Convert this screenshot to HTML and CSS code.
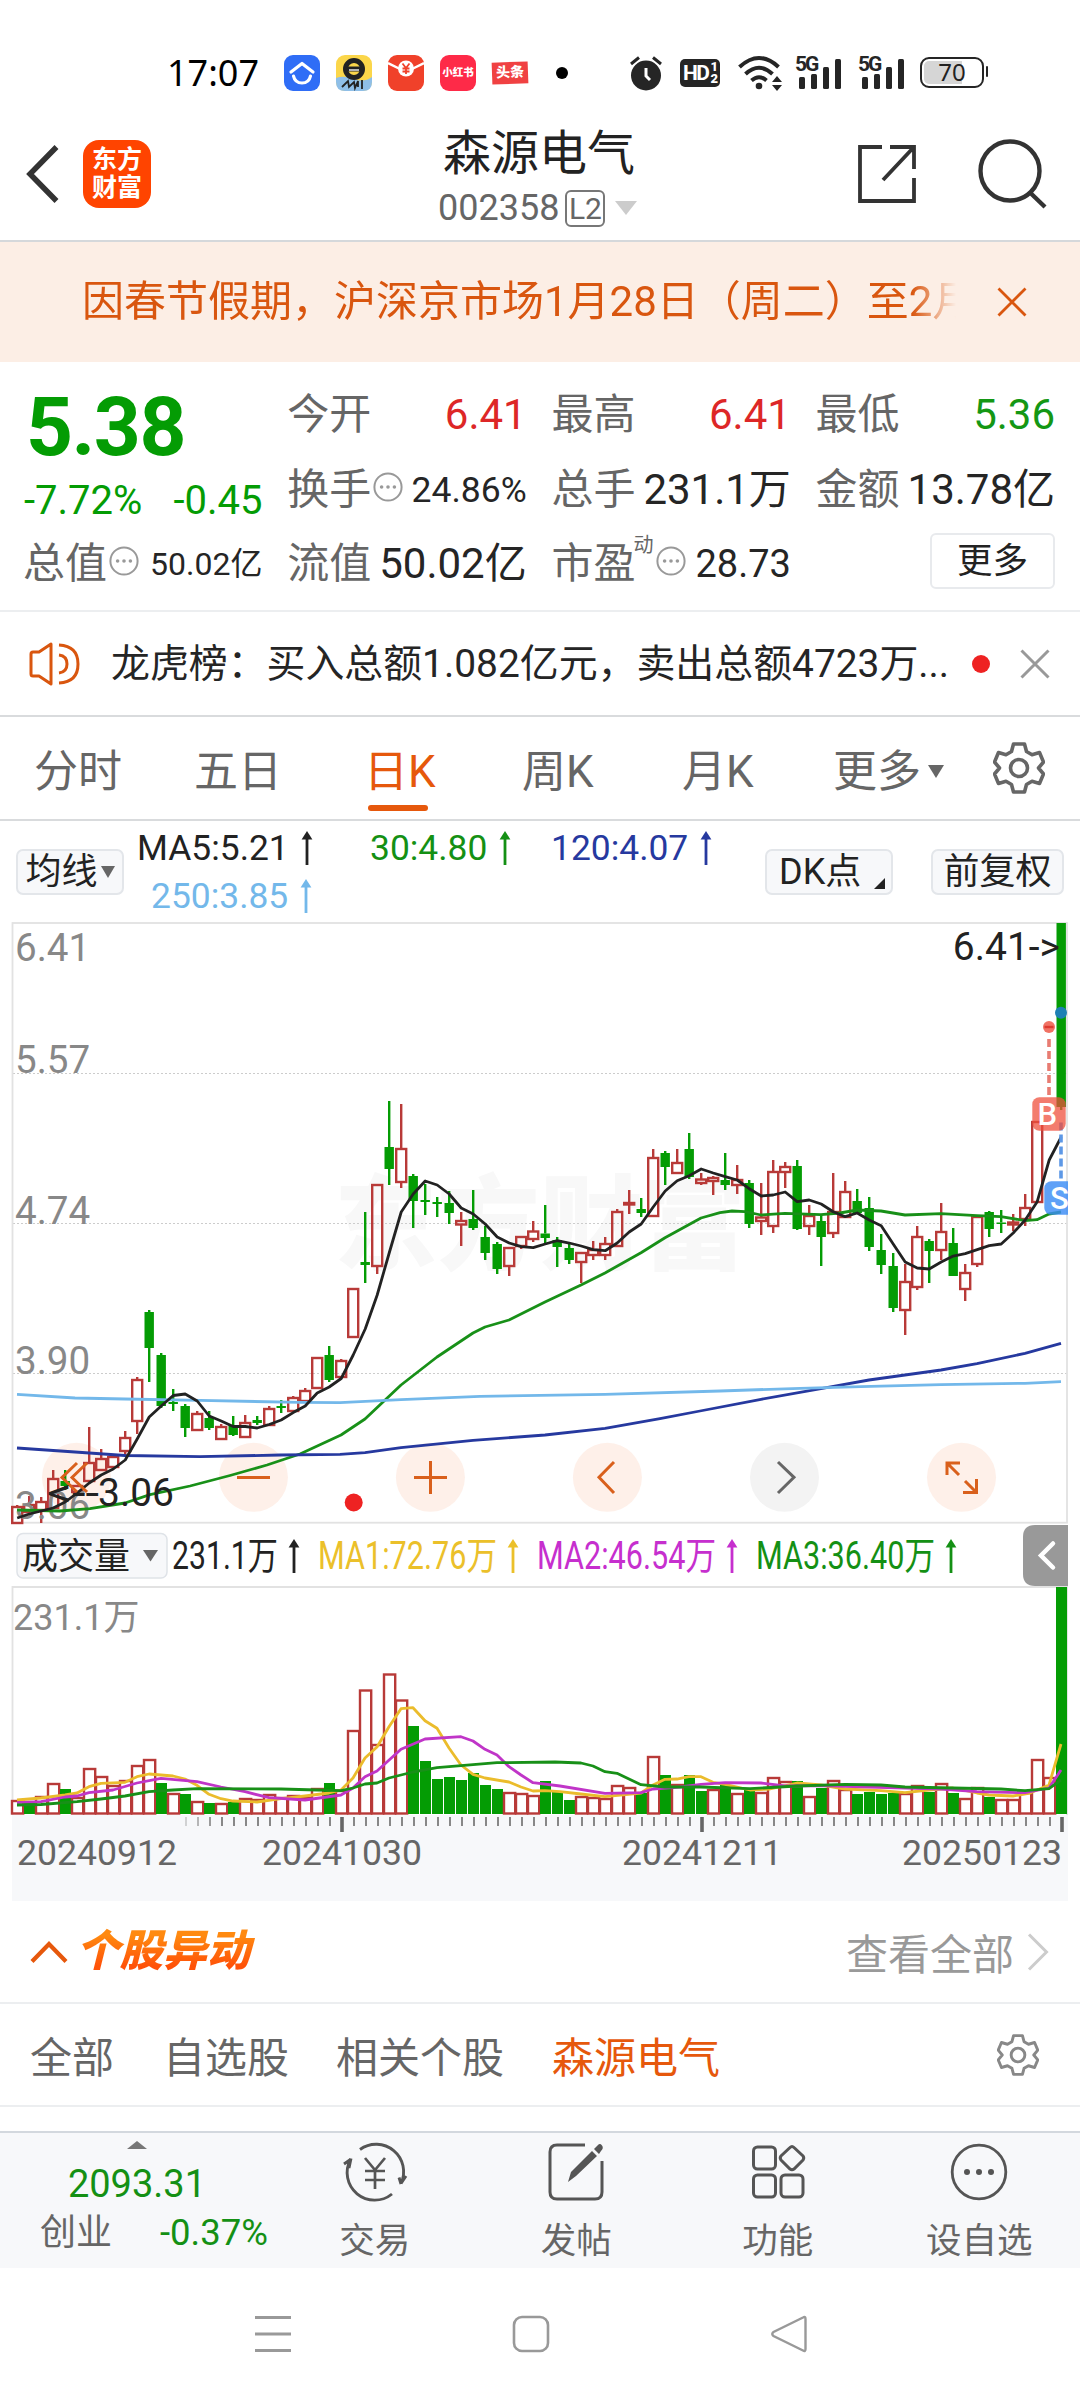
FILE: index.html
```html
<!DOCTYPE html>
<html lang="zh-CN">
<head>
<meta charset="utf-8">
<title>森源电气 002358</title>
<link rel="stylesheet" href="styles.css">
</head>
<body>
<svg class="defs" width="0" height="0" aria-hidden="true">
  <symbol id="more" viewBox="0 0 30 30"><circle cx="15" cy="15" r="13.6" fill="none" stroke="#999" stroke-width="2"/><g fill="#999"><circle cx="8.6" cy="15" r="1.8"/><circle cx="15" cy="15" r="1.8"/><circle cx="21.4" cy="15" r="1.8"/></g></symbol>
  <symbol id="arrow" viewBox="0 0 12 34"><path d="M6 4V34" stroke="currentColor" stroke-width="2.8"/><path d="M.6 8.500L6 0L11.400 8.500Z" fill="currentColor"/></symbol>
  <symbol id="gear" viewBox="0 0 52 52"><path d="M20.500 2H31.500L33.500 9.500L39 12.700L46.500 10.500L50.500 20L45.500 26L50.500 32L46.500 41.500L39 39.300L33.500 42.500L31.500 50H20.500L18.500 42.500L13 39.300L5.500 41.500L1.500 32L6.500 26L1.500 20L5.500 10.500L13 12.700L18.500 9.500Z" fill="none" stroke="currentColor" stroke-width="3.600" stroke-linejoin="round"/><circle cx="26" cy="26" r="8.500" fill="none" stroke="currentColor" stroke-width="3.600"/></symbol>
  <symbol id="bars" viewBox="0 0 48 34"><g fill="#252525"><rect x="4" y="21" width="6" height="12" rx="1.500"/><rect x="16" y="18" width="6" height="15" rx="1.500"/><rect x="28" y="11" width="6" height="22" rx="1.500"/><rect x="40" y="3" width="6" height="30" rx="1.500"/></g></symbol>
</svg>

<header class="status">
  <span class="clock">17:07</span>
  <svg class="app" viewBox="0 0 36 36"><rect width="36" height="36" rx="9" fill="#2f6df6"/><path d="M7 17L18 8.500L29 17M9.500 21Q11 28 18 28T26.500 21" fill="none" stroke="#fff" stroke-width="3.200" stroke-linecap="round" stroke-linejoin="round"/></svg>
  <svg class="app" viewBox="0 0 36 36"><rect width="36" height="36" rx="9" fill="#fbd64a"/><path d="M0 23Q8 20 18 24T36 22V27Q36 36 27 36H9Q0 36 0 27Z" fill="#8fbfe8"/><circle cx="18" cy="14" r="8.500" fill="none" stroke="#222" stroke-width="5"/><path d="M10 14H26" stroke="#222" stroke-width="5"/><path d="M13 15H23" stroke="#ddd" stroke-width="1.600"/><path d="M6 32L12 26L13 32L18 27L19 33L22 26V32M26 25V34" fill="none" stroke="#222" stroke-width="1.800"/></svg>
  <svg class="app" viewBox="0 0 36 36"><rect width="36" height="36" rx="9" fill="#f0412a"/><path d="M0 8L12 14M36 8L24 14" stroke="#fff" stroke-width="2.500"/><circle cx="18" cy="13.500" r="8" fill="#fff"/><path d="M14.500 8.500L18 13L21.500 8.500M18 13V19M14.500 13.500H21.500M14.500 16.500H21.500" stroke="#f0412a" stroke-width="1.800" fill="none"/></svg>
  <span class="app app-book">小红书</span>
  <span class="app app-news">头条</span>
  <i class="status-dot"></i>
  <svg class="alarm" viewBox="0 0 34 36"><circle cx="17" cy="20.500" r="15" fill="#252525"/><path d="M2 9L10 2.500M24 2.500L32 9" stroke="#252525" stroke-width="3"/><path d="M17 13V21L21 25" stroke="#fff" stroke-width="3" fill="none"/></svg>
  <span class="hd">HD<small><b>1</b><b>2</b></small></span>
  <svg class="wifi" viewBox="0 0 46 36"><g fill="none" stroke="#252525" stroke-width="4"><path d="M1.500 12Q21 -6 40.500 12"/><path d="M7.500 19Q21 6.500 34.500 19"/><path d="M13.500 25.500Q21 19 28.500 25.500"/></g><circle cx="21" cy="31" r="3.300" fill="#252525"/><path d="M34 27L39 21L44 27ZM34 30H44L39 36Z" fill="#252525"/></svg>
  <span class="signal"><em>5G</em><svg viewBox="0 0 48 34"><use href="#bars"/></svg></span>
  <span class="signal second"><em>5G</em><svg viewBox="0 0 48 34"><use href="#bars"/></svg></span>
  <span class="battery">70</span>
</header>

<nav class="titlebar">
  <svg class="back" viewBox="0 0 34 60"><path d="M30.500 3L4 30L30.500 57" fill="none" stroke="#333" stroke-width="5.500"/></svg>
  <div class="brand"><span>东方</span><span>财富</span></div>
  <div class="stock">
    <h1>森源电气</h1>
    <div class="code">002358<span class="l2">L2</span><i></i></div>
  </div>
  <svg class="share" viewBox="0 0 60 60"><path d="M25 3H3V57H57V34M33 3H57V25M57 3L26 36" fill="none" stroke="#333" stroke-width="3.800"/></svg>
  <svg class="search" viewBox="0 0 70 72"><circle cx="33" cy="33" r="29.500" fill="none" stroke="#333" stroke-width="4.400"/><path d="M53.500 55L68 69" stroke="#333" stroke-width="4.400"/></svg>
</nav>

<section class="banner">
  <p>因春节假期，沪深京市场1月28日（周二）至2月</p>
  <svg viewBox="0 0 30 30"><path d="M1.500 1.500L28.500 28.500M28.500 1.500L1.500 28.500" stroke="#d9560f" stroke-width="2.800"/></svg>
</section>

<section class="quote">
  <div class="main">
    <div class="price">5.38</div>
    <div class="change"><span>-7.72%</span><span>-0.45</span></div>
  </div>
  <div class="cell"><label>今开</label><b class="up">6.41</b></div>
  <div class="cell"><label>最高</label><b class="up">6.41</b></div>
  <div class="cell"><label>最低</label><b class="down">5.36</b></div>
  <div class="cell"><label>换手</label><svg class="info"><use href="#more"/></svg><b class="s36">24.86%</b></div>
  <div class="cell"><label>总手</label><b>231.1万</b></div>
  <div class="cell"><label>金额</label><b>13.78亿</b></div>
  <div class="cell"><label>总值</label><svg class="info"><use href="#more"/></svg><b class="s32">50.02亿</b></div>
  <div class="cell"><label>流值</label><b>50.02亿</b></div>
  <div class="cell"><label>市盈</label><sup>动</sup><svg class="info"><use href="#more"/></svg><b class="s38">28.73</b></div>
  <div class="cell"><button class="more-btn">更多</button></div>
</section>

<section class="notice">
  <svg class="speaker" viewBox="0 0 52 44"><g fill="none" stroke="#d9560f" stroke-width="3" stroke-linejoin="round"><path d="M2 12Q2 10 4 10H10L22 2V42L10 34H4Q2 34 2 32Z"/><path d="M30 3Q49 4 49 22T30 41" /><path d="M30 13Q38 14 38 22T30 31"/></g></svg>
  <p>龙虎榜：买入总额1.082亿元，卖出总额4723万...</p>
  <i></i>
  <svg class="close" viewBox="0 0 30 30"><path d="M1.500 1.500L28.500 28.500M28.500 1.500L1.500 28.500" stroke="#999" stroke-width="3"/></svg>
</section>

<nav class="periods">
  <span>分时</span><span>五日</span><span class="active">日K</span><span>周K</span><span>月K</span><span>更多<i></i></span>
  <svg class="gear"><use href="#gear"/></svg>
</nav>

<section class="ma">
  <button class="pill">均线<i class="tri"></i></button>
  <div class="ma-list">
    <span class="m1">MA5:5.21<svg class="arr"><use href="#arrow"/></svg></span>
    <span class="m2">30:4.80<svg class="arr"><use href="#arrow"/></svg></span>
    <span class="m3">120:4.07<svg class="arr"><use href="#arrow"/></svg></span>
    <span class="m4">250:3.85<svg class="arr"><use href="#arrow"/></svg></span>
  </div>
  <button class="pill dk">DK点<i class="corner"></i></button>
  <button class="pill adj">前复权</button>
</section>

<section class="chart">
  <svg id="kline" viewBox="0 921 1080 604" width="1080" height="604">
    <defs><clipPath id="frame"><rect x="12" y="922" width="1056" height="602"/></clipPath></defs>
    <text class="mark" x="334" y="1262" textLength="412">东方财富</text>
    <g class="grid"><path d="M13 1073.500H1067M13 1223.500H1067M13 1373.500H1067"/></g>
    <rect class="border" x="12.500" y="923" width="1054.500" height="599.700"/>
    <g class="rounds"><circle cx="76.500" cy="1477.300" r="34.500"/><circle cx="253.400" cy="1477.300" r="34.500"/><circle cx="430.400" cy="1477.300" r="34.500"/><circle cx="607.400" cy="1477.300" r="34.500"/><circle class="off" cx="784.500" cy="1477.300" r="34.500"/><circle cx="961.500" cy="1477.300" r="34.500"/></g>
    <g id="candles"></g>
    <g class="axis"><text x="15" y="961">6.41</text><text x="15" y="1073">5.57</text><text x="15" y="1223.500">4.74</text><text x="15" y="1373.500">3.90</text><text x="15" y="1519">3.06</text></g>
    <g id="averages"></g>
    <g class="icons"><path d="M77 1463L62 1477.500L77 1492M87 1463L72 1477.500L87 1492M237 1477.500H270M414 1477.500H447M430.500 1461V1494M614 1462L599 1477.300L614 1493M947 1475V1463H960M947 1463L959 1475M965 1481L976 1492M963 1492.500H976.500V1479"/><path class="off" d="M778 1462L794 1477.300L778 1493"/></g>
    <g class="tags"><text x="47" y="1505.500" textLength="52" lengthAdjust="spacingAndGlyphs">&lt;--</text><text x="98" y="1505.500">3.06</text><text x="1060" y="959.500" text-anchor="end">6.41-&gt;</text></g>
    <circle cx="353.700" cy="1502.500" r="9" fill="#ee2222"/>
    <g clip-path="url(#frame)">
      <path d="M1049 1039V1097" stroke="#e87c72" stroke-width="3.600" stroke-dasharray="8 4"/>
      <path d="M1061 1122.500V1181" stroke="#5d98e6" stroke-width="3.600" stroke-dasharray="8 4"/>
      <circle cx="1049" cy="1027" r="6" fill="#f07264"/><path d="M1044.500 1027H1053.500" stroke="#dd3a30" stroke-width="2.400"/>
      <circle cx="1061" cy="1012.700" r="6" fill="#1d80b4"/>
      <rect x="1032.300" y="1097.300" width="33.400" height="33.400" rx="7" fill="#ef4e3c" fill-opacity=".74"/>
      <rect x="1044.300" y="1181.300" width="33.400" height="33.400" rx="7" fill="#3c8cf5" fill-opacity=".82"/>
      <text class="flag" x="1037.500" y="1125">B</text><text class="flag" x="1050" y="1209">S</text>
    </g>
  </svg>
  <svg id="volhead" viewBox="0 1525 1080 61" width="1080" height="61">
    <rect x="17" y="1533.500" width="150" height="44.500" rx="6" fill="#f7f8fa" stroke="#dfe3e8" stroke-width="1.500"/>
    <text class="name" x="22" y="1569">成交量</text><path d="M143 1550H158L150.500 1561.500Z" fill="#666"/>
    <g class="vma">
      <g color="#222"><text x="172" y="1569.300" textLength="106" lengthAdjust="spacingAndGlyphs">231.1万</text><use href="#arrow" x="288" y="1539" width="12" height="34"/></g>
      <g color="#ebc02a"><text x="318" y="1569.300" textLength="179" lengthAdjust="spacingAndGlyphs">MA1:72.76万</text><use href="#arrow" x="507" y="1539" width="12" height="34"/></g>
      <g color="#c62fce"><text x="537" y="1569.300" textLength="179" lengthAdjust="spacingAndGlyphs">MA2:46.54万</text><use href="#arrow" x="726" y="1539" width="12" height="34"/></g>
      <g color="#149014"><text x="756" y="1569.300" textLength="179" lengthAdjust="spacingAndGlyphs">MA3:36.40万</text><use href="#arrow" x="945" y="1539" width="12" height="34"/></g>
    </g>
    <path d="M1068 1525H1035Q1023 1525 1023 1537V1574Q1023 1586 1035 1586H1068Z" fill="#999"/><path d="M1053 1543.500L1041 1555.500L1053 1567.500" fill="none" stroke="#fff" stroke-width="4.500" stroke-linecap="round"/>
  </svg>
  <svg id="volume" viewBox="0 1586 1080 315" width="1080" height="315">
    <rect x="12" y="1815" width="1056" height="86" fill="#f7f8fa"/>
    <path class="border" d="M12.500 1815V1587H1067V1815"/>
    <text class="vlabel" x="13" y="1630">231.1万</text>
    <g id="volbars"></g><g id="volma"></g><g id="ticks"></g>
    <g class="dates"><text x="17" y="1865">20240912</text><text x="262" y="1865">20241030</text><text x="622" y="1865">20241211</text><text x="1062" y="1865" text-anchor="end">20250123</text></g>
  </svg>
</section>

<section class="moves">
  <svg class="chev-up" viewBox="0 0 38 24"><path d="M2 21.500L19 4L36 21.500" fill="none" stroke="#e6580c" stroke-width="4.200"/></svg>
  <h2>个股异动</h2>
  <a>查看全部</a>
  <svg class="chev" viewBox="0 0 22 38"><path d="M2 1.500L19.500 19L2 36.500" fill="none" stroke="#ccc" stroke-width="3"/></svg>
</section>

<nav class="filters">
  <span>全部</span><span>自选股</span><span>相关个股</span><span class="active">森源电气</span>
  <svg class="gear small"><use href="#gear"/></svg>
</nav>
<div class="gap"></div>

<footer class="dock">
  <div class="index"><i></i><strong>2093.31</strong><p><span>创业</span><b>-0.37%</b></p></div>
  <div class="item"><svg viewBox="0 0 66 62"><g fill="none" stroke="#555" stroke-width="2.900"><path d="M18 8.500A27.500 27.500 0 0 1 59 42.500L64 35M59 43L57 36.500"/><path d="M50 53A27.500 27.500 0 0 1 8.500 18.500L2 23M9 17.500L7 27"/><path d="M23 17L33 29L43 17M33 29V48M23 30H43M23 39H43" stroke-width="2.700"/></g></svg><span>交易</span></div>
  <div class="item"><svg viewBox="0 0 66 62"><path d="M42 4H14Q7 4 7 11V51Q7 58 14 58H52Q59 58 59 51V20" fill="none" stroke="#555" stroke-width="3"/><path d="M25 41L28 31L49 10L54 15L33 35ZM51 8L55 4Q57 2 59 4.500T58 10L56 13Z" fill="#555"/></svg><span>发帖</span></div>
  <div class="item"><svg viewBox="0 0 66 62"><g fill="none" stroke="#555" stroke-width="3"><rect x="8.500" y="6" width="22" height="22" rx="4"/><rect x="8.500" y="34" width="22" height="22" rx="4"/><rect x="36" y="34" width="22" height="22" rx="4"/><path d="M45 6.500Q47 4.500 49 6.500L58 15Q59.500 17 58 19L49 28Q47 29.500 45 28L36 19Q34.500 17 36 15Z"/></g></svg><span>功能</span></div>
  <div class="item"><svg viewBox="0 0 66 62"><circle cx="33" cy="31" r="26.800" fill="none" stroke="#555" stroke-width="2.800"/><g fill="#555"><circle cx="21" cy="31" r="3"/><circle cx="33" cy="31" r="3"/><circle cx="45" cy="31" r="3"/></g></svg><span>设自选</span></div>
</footer>

<div class="sysnav">
  <svg viewBox="0 0 40 40"><path d="M2 3.500H38M2 20H38M2 36.500H38" stroke="#999" stroke-width="2.800"/></svg>
  <svg viewBox="0 0 40 40"><rect x="3" y="3" width="34" height="34" rx="8" fill="none" stroke="#999" stroke-width="2.600"/></svg>
  <svg viewBox="0 0 40 40"><path d="M34 3.500Q36.500 2 36.500 5V35Q36.500 38 34 36.500L4.500 22Q2 20 4.500 18Z" fill="none" stroke="#999" stroke-width="2.400"/></svg>
</div>
<script src="chart.js"></script>
</body>
</html>
```
FILE: styles.css
```css
* { box-sizing: border-box; margin: 0; padding: 0; }
body { width: 1080px; height: 2400px; overflow: hidden; background: #fff; color: #222; font-family: Roboto, "Noto Sans CJK SC", sans-serif; }
svg { display: block; flex: none; }
.defs { position: absolute; }
i, em { font-style: normal; }
button { font: inherit; color: inherit; background: none; border: 0; }
label { color: #666; }

.status { height: 108px; padding: 37px 0 0 167px; display: flex; align-items: center; }
.clock { font: 36px/36px "Noto Sans", sans-serif; color: #000; width: 117px; }
.app { width: 36px; height: 36px; margin-right: 16px; flex: none; }
.app-book { border-radius: 9px; background: #fe2a48; color: #fff; font-size: 10.5px; line-height: 36px; font-weight: 900; text-align: center; white-space: nowrap; }
.app-news { height: 22px; background: #f04142; color: #fff; font-size: 14px; line-height: 21px; font-weight: 900; text-align: center; transform: rotate(-2deg); }
.status-dot { width: 12px; height: 12px; border-radius: 50%; background: #000; margin-left: 12px; }
.alarm { width: 34px; height: 36px; margin: 0 17px 0 61px; }
.hd { width: 40px; height: 28px; border-radius: 5px; background: #252525; color: #fff; font-weight: 700; font-size: 21px; line-height: 28px; padding-left: 3px; display: flex; letter-spacing: -1.5px; }
.hd small { display: flex; flex-direction: column; font-size: 13px; line-height: 12px; padding: 2px 0 0 2px; }
.wifi { width: 46px; height: 36px; margin-left: 18px; }
.signal { position: relative; width: 48px; height: 34px; margin-left: 11px; }
.signal.second { margin-left: 15px; }
.signal svg { width: 48px; height: 34px; }
.signal em { position: absolute; left: 0; top: -2px; font-size: 21px; line-height: 20px; font-weight: 700; color: #252525; letter-spacing: -2px; }
.battery { width: 64px; height: 31px; margin-left: 14px; border: 2.500px solid #252525; border-radius: 9px; font: 24px/26px "Noto Sans", sans-serif; text-align: center; background: linear-gradient(90deg, #d6d6d6 66%, #fff 66%); box-shadow: inset 0 0 0 2px #fff; position: relative; }
.battery::after { content: ""; position: absolute; right: -6px; top: 7px; width: 2.500px; height: 11px; background: #252525; border-radius: 2px; }

.titlebar { height: 134px; border-bottom: 2px solid #d5d8db; display: flex; align-items: center; }
.back { width: 34px; height: 60px; margin-left: 26px; }
.brand { margin-left: 23px; width: 68px; height: 68px; border-radius: 16px; background: #ff4400; color: #fff; font-size: 25px; line-height: 28px; font-weight: 700; text-align: center; padding-top: 6px; display: flex; flex-direction: column; }
.stock { width: 300px; margin: 6px 0 0 239px; }
h1 { font-size: 48px; line-height: 60px; font-weight: 400; padding-left: 53px; }
.code { display: flex; align-items: center; height: 44px; margin-top: 2px; font-size: 36px; color: #666; padding-left: 48px; }
.l2 { border: 2px solid #777; border-radius: 6px; width: 40px; height: 37px; margin-left: 6px; font-size: 30px; line-height: 33px; text-align: center; }
.code i { border: 11px solid transparent; border-top: 14px solid #ccc; border-bottom: 0; margin-left: 10px; }
.share { width: 60px; height: 60px; margin-left: 167px; }
.search { width: 70px; height: 72px; margin-left: 60px; }

.banner { height: 120px; background: #fceee5; display: flex; align-items: center; padding-left: 82px; }
.banner p { width: 874px; font-size: 42px; line-height: 60px; white-space: nowrap; overflow: hidden; color: #d9560f; -webkit-mask-image: linear-gradient(90deg, #000 830px, transparent 874px); mask-image: linear-gradient(90deg, #000 830px, transparent 874px); }
.banner svg { width: 30px; height: 30px; margin-left: 41px; }

.quote { height: 250px; padding: 16px 25px 8px 23px; border-bottom: 2px solid #eceef0; display: grid; grid-template-columns: repeat(4, 239.500px); grid-template-rows: repeat(3, 74.400px); column-gap: 24.700px; }
.main { grid-row: span 2; color: #049c04; }
.price { font-size: 82px; line-height: 94px; font-weight: 700; margin: 2px 0 0 3px; height: 94px; letter-spacing: -1.500px; }
.change { display: flex; justify-content: space-between; font-size: 40px; line-height: 54px; padding-left: 1px; }
.cell { display: flex; align-items: center; font-size: 42px; line-height: 60px; white-space: nowrap; position: relative; }
.cell b { font-weight: 400; margin-left: auto; color: #252525; }
.cell .up { color: #dd2727; }
.cell .down { color: #149714; }
.s36 { font-size: 35.500px; }
.s32 { font-size: 32px; }
.s38 { font-size: 38px; }
.info { width: 30px; height: 30px; margin: -6px 0 0 2px; }
.cell sup { font-size: 20px; color: #666; margin: -38px 0 0 -2px; width: 22px; line-height: 24px; }
.cell sup + .info { margin-left: 1px; }
.more-btn { width: 125px; height: 56px; margin: 0 0 5px auto; border: 2px solid #e8eaed; border-radius: 6px; font-size: 35.500px; line-height: 51px; }

.notice { height: 105px; border-bottom: 2px solid #d9dbdd; display: flex; align-items: center; padding-left: 29px; }
.speaker { width: 52px; height: 44px; }
.notice p { font-size: 38.900px; line-height: 60px; width: 861px; margin: 0 0 0 30px; white-space: nowrap; color: #252525; }
.notice i { width: 18px; height: 18px; border-radius: 50%; background: #ee2222; }
.close { width: 30px; height: 30px; margin-left: 30px; }

.periods { height: 104px; border-bottom: 2px solid #d9dbdd; position: relative; display: grid; grid-template-columns: 160px 170px 158px 160px 151px 160px auto; padding-left: 34px; align-items: center; font-size: 44px; color: #666; }
.periods .active { color: #e6580c; position: relative; }
.periods .active::after { content: ""; position: absolute; left: 4px; bottom: -11px; width: 60px; height: 6px; border-radius: 3px; background: #e6580c; }
.periods span i { display: inline-block; border: 8px solid transparent; border-top: 13px solid #666; border-bottom: 0; margin: 0 0 9px 7px; }
.gear { width: 52px; height: 52px; color: #666; }

.ma { height: 100px; display: flex; align-items: center; padding-left: 16px; }
.pill { height: 46px; width: 108px; margin-top: 1px; border: 2px solid #e3e6ea; border-radius: 7px; background: #f7f8fa; font-size: 36px; line-height: 42px; display: flex; align-items: center; justify-content: center; position: relative; white-space: nowrap; flex: none; }
.tri { border: 7px solid transparent; border-top: 12px solid #666; border-bottom: 0; margin-left: 3px; }
.ma-list { display: grid; grid-template-columns: 233px 181px 170px; grid-template-rows: 48px 48px; margin: 2px 0 0 13px; width: 628px; font-size: 35.400px; }
.ma-list span { display: flex; align-items: center; }
.arr { width: 12px; height: 34px; margin-left: 12px; }
.m2 { color: #149014; }
.m3 { color: #26399f; }
.m4 { color: #73b8ea; padding-left: 14px; }
.dk { width: 128px; justify-content: flex-start; padding-left: 12px; }
.corner { position: absolute; right: 6px; bottom: 4px; border-left: 11px solid transparent; border-bottom: 11px solid #222; }
.adj { width: 133px; margin-left: 38px; }

.chart text { font-family: Roboto, "Noto Sans CJK SC", sans-serif; }
.mark { font-size: 103px; font-weight: 900; fill: #f8f8f8; }
.grid path { stroke: #ccc; stroke-width: 1; stroke-dasharray: 2 2; }
.border { fill: none; stroke: #e2e2e2; stroke-width: 1.800; }
.rounds { fill: #fef0e9; }
.rounds .off { fill: #f3f3f3; }
.axis { font-size: 38.600px; fill: #888; }
.icons path { fill: none; stroke: #d9601c; stroke-width: 3; }
.icons .off { stroke: #666; }
.tags { font-size: 39px; fill: #222; }
.flag { font-size: 31px; font-weight: 500; fill: #fff; }
.name { font-size: 36px; fill: #222; }
.vma text { font-size: 38px; fill: currentColor; }
.vlabel { font-size: 36px; fill: #888; }
.dates { font-size: 35.600px; fill: #666; }
.line { fill: none; stroke-width: 2.800; stroke-linejoin: round; }
.rise { fill: #fff; stroke: #b83a38; stroke-width: 2.400; }
#candles .rise { fill: none; }
.fall { fill: #049c04; stroke: #049c04; stroke-width: 2.400; }

.moves { height: 103px; border-bottom: 2px solid #eceef0; display: flex; align-items: center; padding-left: 30px; }
.chev-up { width: 38px; height: 24px; }
h2 { font-size: 43.500px; line-height: 56px; font-weight: 900; font-style: italic; margin-left: 8px; padding-right: 8px; width: 185px; background: linear-gradient(#ff8a10 20%, #ff5208 75%); -webkit-background-clip: text; background-clip: text; color: transparent; }
.moves a { font-size: 42px; color: #999; margin-left: 585px; }
.chev { width: 22px; height: 38px; margin-left: 13px; }
.filters { height: 103px; border-bottom: 2px solid #eceef0; display: grid; grid-template-columns: 133px 173px 216px 445px auto; align-items: center; padding-left: 30px; font-size: 42px; color: #666; }
.filters .active { color: #e6580c; }
.gear.small { width: 42px; height: 42px; color: #888; }
.gap { height: 24px; }

.dock { height: 137px; background: #f7f8fa; border-top: 2px solid #d3d8de; display: grid; grid-template-columns: 274px repeat(4, 201.500px); }
.index { position: relative; display: flex; flex-direction: column; align-items: center; color: #149014; }
.index > i { border: 10px solid transparent; border-bottom: 8px solid #777; border-top: 0; margin-top: 8px; }
.index strong { font-size: 38px; line-height: 44px; font-weight: 400; margin-top: 13px; }
.index p { display: flex; justify-content: space-between; width: 228px; margin: 1px 0 0 34px; font-size: 36.500px; line-height: 52px; }
.index p span { color: #666; font-size: 36px; }
.index b { font-weight: 400; }
.item { display: flex; flex-direction: column; align-items: center; font-size: 35.500px; line-height: 52px; color: #666; padding-top: 8px; }
.item svg { width: 66px; height: 62px; margin-bottom: 12px; }
.sysnav { height: 131px; display: flex; justify-content: space-between; align-items: center; padding: 0 271px 0 253px; }
.sysnav svg { width: 40px; height: 40px; }
```
FILE: chart.js
```js
const NS = "http://www.w3.org/2000/svg";
const add = (parent, name, attrs) => {
  const el = document.createElementNS(NS, name);
  for (const k in attrs) el.setAttribute(k, attrs[k]);
  document.getElementById(parent).appendChild(el);
};
const X = i => 17.2 + 12 * i;

// direction, high, body top, body bottom, low
const candles = `r 1505 1507 1523 1523|r 1496 1505 1512 1512|r 1497 1502 1510 1523|r 1470 1479 1508 1508|g 1470 1481 1486 1490|r 1485 1486 1492 1492|r 1427 1463 1481 1481|r 1449 1459 1470 1470|r 1456 1457 1467 1467|r 1431 1438 1451 1457|r 1377 1380 1421 1434|g 1310 1312 1348 1382|g 1353 1355 1406 1408|g 1389 1402 1404 1411|g 1404 1406 1428 1437|r 1411 1414 1430 1430|g 1411 1418 1428 1430|r 1424 1427 1439 1439|g 1416 1425 1435 1436|r 1415 1423 1437 1438|g 1416 1420 1423 1425|r 1406 1409 1425 1426|g 1400 1406 1408 1413|r 1396 1398 1411 1411|r 1388 1391 1401 1401|r 1358 1358 1388 1388|g 1346 1355 1380 1382|r 1359 1361 1377 1377|r 1288 1289 1337 1337|g 1212 1262 1265 1283|r 1184 1185 1266 1274|g 1101 1147 1169 1185|r 1104 1149 1182 1188|g 1174 1176 1201 1228|g 1184 1200 1202 1215|g 1197 1202 1204 1217|g 1191 1203 1213 1224|r 1212 1221 1224.500 1246|g 1190 1219 1228 1230|g 1226 1237 1253 1260|g 1242 1244 1269 1274|r 1247 1248 1266 1276|r 1236 1237 1246 1249|r 1221 1231.500 1239 1242|g 1205 1233.500 1238 1243|g 1237 1240 1247 1267|g 1244 1248 1260 1264|r 1252 1253 1262 1283|r 1241 1250 1255 1260|r 1237 1244 1255 1260|r 1209 1212 1246 1246|r 1190 1203 1204.500 1214|g 1198 1209 1213 1217|r 1149 1158 1216 1217|g 1151 1153 1167 1185|r 1149 1163 1173 1173|g 1133 1149 1177 1179|r 1173 1179.500 1183 1185|r 1176 1178 1181 1195|g 1153 1180 1185 1190|r 1165 1180 1185 1194|g 1180 1183 1224 1228|r 1183 1217.500 1221 1235|r 1160 1172 1226 1233|r 1162 1167 1172 1188|g 1160 1166 1229 1230|r 1205 1216 1226 1235|g 1215 1221 1237 1266|r 1173 1212 1233 1238|r 1181 1192 1217 1217|g 1189 1201 1213 1213|g 1197 1208 1247 1251|g 1234 1250 1265 1274|g 1253 1266 1308 1312|r 1264 1282 1310 1335|r 1226 1237 1287 1290|g 1239 1241 1251 1283|r 1203 1232 1250 1260|g 1228 1243 1276 1276|r 1264 1273 1289 1301|r 1216 1217 1264 1267|g 1211 1212 1229 1237|g 1210 1222.500 1224 1233|r 1214 1222.500 1224.500 1231|r 1194 1208 1219 1226|r 1121 1122 1202 1203|r 1027 1027 1027 1027|g 923 923 1107 1110`;
candles.split("|").forEach((row, i) => {
  const [dir, ...v] = row.split(" ");
  const [high, top, bottom, low] = v.map(Number);
  if (i === 86) return;
  const cls = dir === "r" ? "rise" : "fall";
  const w = dir === "r" ? 10 : 9.4;
  add("candles", "path", { class: cls, d: `M${X(i)} ${high}V${top}M${X(i)} ${bottom}V${low}` });
  add("candles", "rect", { class: cls, style: `stroke-width:${dir === "r" ? 2.4 : 0}`, x: X(i) - w / 2, y: top, width: w, height: Math.max(bottom - top, 0.8) });
});

const line = (parent, pts, color) => add(parent, "polyline", { class: "line", points: pts, stroke: color });
line("averages", "17,1510 60,1511 90,1508.6 125,1503 150,1494.7 190,1486 230,1475.5 267,1465 300,1454 341,1435 365,1419 401,1385 437,1357 473,1333 485,1327 509,1320 545,1302 581,1285 605,1273 641,1252.7 665,1237.7 701,1218 720,1212.7 732,1211 745,1211.7 761,1215 785,1213.3 821,1214.7 840,1213 857,1210 881,1211 905,1215 941,1213.7 977,1215.7 1001,1216.7 1025,1220.7 1037,1219.7 1049,1214 1061,1212", "#189018");
line("averages", "17,1448 75,1452 125,1455.5 200,1456.7 280,1455 340,1454.3 365,1452.7 401,1447.7 473,1440.3 545,1435 605,1428.3 660,1418.7 700,1411 761,1399.3 821,1388.7 869,1380 941,1370 977,1363.7 1025,1353.3 1061,1343.3", "#26399f");
line("averages", "17,1394.3 75,1398 125,1399 200,1400.4 300,1402.4 340,1402.7 401,1399.7 480,1396.3 605,1394.3 720,1391 800,1388.3 861,1386.7 941,1384.7 1025,1383.3 1061,1381.7", "#73b8ea");
const ma5 = [1518, 1514, 1511, 1508, 1502, 1493, 1483, 1475, 1469, 1460, 1439, 1417, 1406, 1395.5, 1394, 1401, 1416, 1421, 1426.5, 1426.5, 1428, 1424.5, 1420, 1412.6, 1406, 1393, 1387, 1378.5, 1355, 1329, 1295, 1253, 1212, 1194, 1181, 1185, 1194, 1208, 1214, 1224, 1237, 1243, 1246.7, 1247.7, 1244, 1240.7, 1243, 1246, 1249.7, 1250.7, 1243, 1232, 1224, 1207, 1191, 1180.7, 1175.7, 1169, 1173, 1176.7, 1180, 1188.7, 1196, 1195, 1192, 1201.7, 1200, 1204, 1211.7, 1216.7, 1213, 1220, 1225.7, 1244, 1262, 1268, 1269, 1262, 1256, 1253.7, 1249.7, 1245.7, 1244, 1233, 1220, 1201.7, 1160, 1137];
line("averages", ma5.map((y, i) => `${X(i)},${y}`).join(" "), "#222");

const volumes = "r1800 g1803 r1796 r1783 g1789 r1797 r1768 r1776 r1785 r1780 r1765 r1759 g1783 r1793 g1794 r1801 g1803 r1803 g1802 r1798 r1799 r1794 r1797 r1795 r1797 r1788 g1783 r1790 r1730 r1689.5 r1744 r1673.5 r1699.5 g1726 g1761 g1779 g1777 g1780 g1773 g1785 g1789 r1792 r1793 r1795 g1781 g1792 g1800 r1796 r1797 r1798 r1785 r1787 g1793 r1756 g1775 r1784 g1775 g1791 r1789 g1785 r1793 g1789 r1792 r1777 r1781 g1781 r1796 g1788 r1780 r1789 g1794 g1792 g1794 g1793 r1793 r1785 g1792 r1783 g1793 r1798 r1787 g1797 r1799 r1799 r1792 r1759 r1777 g1587";
volumes.split(" ").forEach((v, i) => {
  const y = +v.slice(1);
  if (v[0] === "r") add("volbars", "rect", { class: "rise", x: X(i) - 5.2, y: y + 1, width: 11.2, height: 1812.5 - y });
  else add("volbars", "rect", { fill: "#049c04", x: X(i) - 5.2, y, width: 11, height: 1814 - y });
});
line("volma", "17,1800 41,1798 65,1795 77,1793 89,1786.7 101,1783.3 125,1782.3 137,1776.7 149,1774 161,1775 173,1776 185,1779 197,1785.3 209,1794.3 221,1798.7 233,1801 257,1802 281,1798.7 305,1796 329,1793 341,1790 353,1778 365,1758 377,1747 389,1726.7 401,1708.7 413,1707.7 425,1720.7 437,1728.3 449,1748 461,1765 473,1774.3 485,1778 509,1782 521,1787 533,1791 545,1790.7 560,1791.7 581,1794 605,1796.7 641,1793 653,1785 665,1779.3 677,1779 689,1776.7 701,1776.7 713,1782.3 725,1784.3 750,1790 770,1789 797,1783 821,1785 845,1789 881,1790.7 905,1792.7 929,1790 953,1788 977,1793 989,1795 1013,1796 1030,1793 1049,1785 1061,1744", "#ebbc2c");
line("volma", "17,1802.7 41,1801.7 65,1797 77,1796 89,1792.7 113,1790 137,1783 161,1778.3 197,1781.7 221,1787 245,1791.7 269,1797.7 305,1800 341,1795 353,1788 365,1776.7 377,1771 401,1749.3 425,1739 461,1736.7 473,1741 485,1749.3 497,1755 509,1766.7 521,1775 533,1782.7 560,1786 605,1793.3 641,1792.7 653,1789 680,1787 701,1784.3 725,1782.7 761,1783 785,1786 821,1785.7 869,1787 905,1788 941,1789 977,1791.7 1025,1792.7 1049,1788 1061,1770", "#c035c8");
line("volma", "17,1805 41,1804.5 77,1801.7 101,1799 125,1796 149,1791.7 173,1790 197,1788.7 281,1789 317,1790 341,1790.7 353,1788 365,1784 377,1783 389,1778 413,1772 437,1767.7 473,1764.7 497,1762.7 555,1762 581,1763 593,1766 605,1771.7 617,1773.3 629,1779 641,1784.7 665,1787 700,1787 750,1788.7 797,1786 845,1784.3 881,1785 905,1787 953,1788 1001,1789 1025,1790.7 1049,1788.7 1061,1780", "#189018");

for (let x = 186; x <= 1062; x += 12) {
  const major = x === 342 || x === 702 || x === 1062;
  add("ticks", "rect", { x: major ? x - 1.8 : x - 1, y: 1817, width: major ? 3.6 : 2, height: major ? 15 : 9, fill: major ? "#666" : "#888", opacity: Math.min(1, (x - 170) / 48) });
}
```
